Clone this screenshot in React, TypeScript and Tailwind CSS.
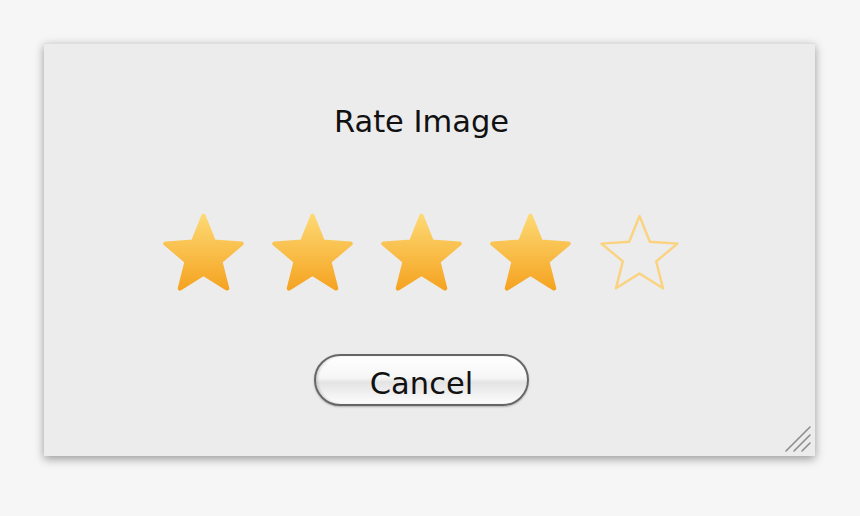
import React from "react";

const starPoints =
  "40.5,3 50.8,28.8 78.54,30.64 57.2,48.4 64.01,75.36 40.5,60.5 16.99,75.36 23.8,48.4 2.46,30.64 30.2,28.8";

const Star = ({ filled, id }: { filled: boolean; id: string }) => (
  <svg width="81" height="78" viewBox="0 0 81 78">
    <defs>
      <linearGradient id={id} x1="0" y1="0" x2="0" y2="1">
        <stop offset="0%" stopColor="#fdd872" />
        <stop offset="100%" stopColor="#f5a422" />
      </linearGradient>
    </defs>
    {filled ? (
      <polygon
        points={starPoints}
        fill={`url(#${id})`}
        stroke={`url(#${id})`}
        strokeWidth="4.5"
        strokeLinejoin="round"
      />
    ) : (
      <polygon
        points={starPoints}
        fill="none"
        stroke="#fbd27e"
        strokeWidth="2.4"
        strokeLinejoin="round"
      />
    )}
  </svg>
);

const ResizeGrip = () => (
  <svg width="30" height="30" viewBox="0 0 30 30" className="absolute right-[2px] bottom-[2px]">
    <g strokeLinecap="round">
      <line x1="3" y1="27" x2="27" y2="3" stroke="#8c8c8c" strokeWidth="1.6" />
      <line x1="11" y1="27" x2="27" y2="11" stroke="#8c8c8c" strokeWidth="1.6" />
      <line x1="19" y1="27" x2="27" y2="19" stroke="#8c8c8c" strokeWidth="1.6" />
    </g>
  </svg>
);

export default function App() {
  const rating = 4;

  return (
    <div className="w-[860px] h-[516px] bg-[#f6f6f6] pt-[43px] pl-[44px] font-['DejaVu_Sans',sans-serif]">
      <div className="relative w-[771px] h-[413px] bg-[#ececec] border-t border-[#dedede] shadow-[0_3px_9px_rgba(0,0,0,0.38)] flex flex-col items-center pt-[58px] pr-[16px]">
        <h1 className="text-[30.5px] leading-[40px] text-[#111] font-normal">Rate Image</h1>

        <div className="flex gap-[28px] mt-[71px]">
          {[1, 2, 3, 4, 5].map((n) => (
            <Star key={n} id={`star-grad-${n}`} filled={n <= rating} />
          ))}
        </div>

        <button className="mt-[63px] w-[215px] h-[52px] rounded-full border-2 border-[#666] bg-[linear-gradient(#ffffff,#f6f6f6_45%,#e4e4e4_55%,#fdfdfd)] shadow-[inset_2px_0_2px_rgba(0,0,0,0.12),0_1px_2px_rgba(0,0,0,0.25)] flex items-center justify-center pt-[8px] text-[30.5px] leading-[40px] text-[#111]">
          Cancel
        </button>

        <ResizeGrip />
      </div>
    </div>
  );
}
